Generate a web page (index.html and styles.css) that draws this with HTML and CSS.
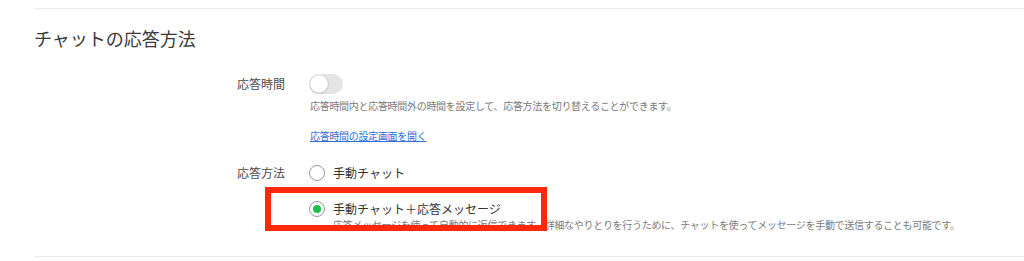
FILE: index.html
```html
<!DOCTYPE html>
<html lang="ja">
<head>
    <meta charset="UTF-8">
    <meta name="viewport" content="width=device-width, initial-scale=1.0">
    <title>チャットの応答方法</title>
    <link rel="stylesheet" href="styles.css">
</head>
<body>
    <div class="section">
        <h2 class="section-title">チャットの応答方法</h2>

        <div class="form">
            <div class="form-label">応答時間</div>
            <div class="form-control">
                <div class="toggle"><span class="knob"></span></div>
                <p class="help">応答時間内と応答時間外の時間を設定して、応答方法を切り替えることができます。</p>
                <a class="link" href="#">応答時間の設定画面を開く</a>
            </div>

            <div class="form-label label-radio">応答方法</div>
            <div class="form-control">
                <label class="radio">
                    <span class="radio-mark"></span>
                    <span>手動チャット</span>
                </label>
                <label class="radio radio-second">
                    <span class="radio-mark checked"></span>
                    <span>手動チャット＋応答メッセージ</span>
                </label>
                <p class="help help-radio">応答メッセージを使って自動的に返信できます。詳細なやりとりを行うために、チャットを使ってメッセージを手動で送信することも可能です。</p>
            </div>
        </div>
    </div>

    <!-- annotation box -->
    <div class="highlight"></div>
</body>
</html>
```

FILE: styles.css
```css
body {
    margin: 0;
    font-family: 'Noto Sans CJK JP', 'Noto Sans', sans-serif;
    color: #333;
    background: #fff;
}

.section {
    margin: 8px 0 0 34px;
    border-top: 1px solid #ebebeb;
    border-bottom: 1px solid #ebebeb;
    padding-bottom: 24px;
}

.section-title {
    margin: 17px 0 0;
    font-size: 18px;
    line-height: 24px;
    font-weight: normal;
    color: #3a3a3a;
}

.form {
    display: grid;
    grid-template-columns: 251px 1fr;
    column-gap: 24px;
    margin-top: 24px;
}

.form-label {
    text-align: right;
    font-size: 12px;
    line-height: 20px;
    color: #4a4a4a;
}

.label-radio {
    margin-top: 22px;
    line-height: 16px;
}

.form-control {
    display: flex;
    flex-direction: column;
    align-items: flex-start;
}

.toggle {
    width: 34px;
    height: 20px;
    border-radius: 10px;
    background: #e5e5e8;
    position: relative;
}

.knob {
    position: absolute;
    left: 1px;
    top: 1px;
    width: 18px;
    height: 18px;
    border-radius: 50%;
    background: #fff;
    box-shadow: 0 0 1px rgba(0, 0, 0, 0.3), 0 1px 2px rgba(0, 0, 0, 0.15);
}

.help {
    margin: 5px 0 0 1px;
    font-size: 10px;
    line-height: 14px;
    color: #7a7a7a;
    letter-spacing: -0.3px;
}

.link {
    margin: 16px 0 0 1px;
    font-size: 10px;
    line-height: 14px;
    color: #2f6fd8;
    text-decoration: underline;
    letter-spacing: -0.3px;
}

.radio {
    display: flex;
    align-items: center;
    gap: 8px;
    margin-top: 22px;
    font-size: 12px;
    line-height: 16px;
    color: #333;
}

.radio-second {
    margin-top: 20px;
}

.radio-mark {
    width: 16px;
    height: 16px;
    box-sizing: border-box;
    border: 1px solid #9a9a9a;
    border-radius: 50%;
    display: flex;
    align-items: center;
    justify-content: center;
}

.radio-mark.checked::after {
    content: '';
    width: 8px;
    height: 8px;
    border-radius: 50%;
    background: #1cbf4a;
}

.help-radio {
    margin: 1px 0 0 24px;
}

.highlight {
    position: absolute;
    left: 265px;
    top: 187px;
    width: 282px;
    height: 44px;
    box-sizing: border-box;
    border: 6px solid #fb2a0c;
}
```
